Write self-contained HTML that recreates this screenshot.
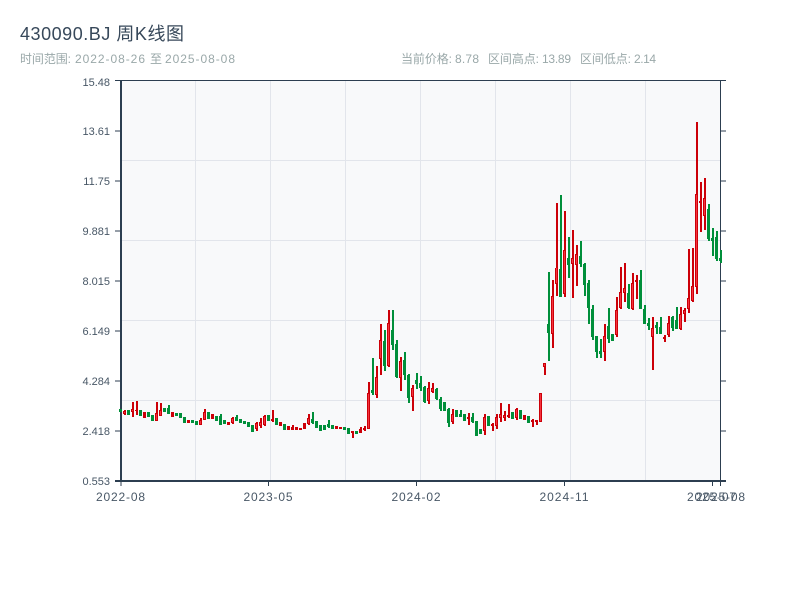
<!DOCTYPE html>
<html lang="zh">
<head>
<meta charset="utf-8">
<title>430090.BJ 周K线图</title>
<style>
html,body{margin:0;padding:0;background:#fff;width:800px;height:600px;overflow:hidden}
svg{display:block}
text{font-family:"Liberation Sans","Noto Sans CJK SC",sans-serif}
</style>
</head>
<body>
<svg width="800" height="600" viewBox="0 0 800 600" xmlns="http://www.w3.org/2000/svg">
<rect width="800" height="600" fill="#fff"/>
<text x="20" y="40" font-size="18" fill="#37485a" textLength="164" lengthAdjust="spacing">430090.BJ 周K线图</text>
<g font-size="12" fill="#9aa8a9">
<text x="20" y="63" textLength="51">时间范围:</text>
<text x="75" y="63" textLength="70">2022-08-26</text>
<text x="150" y="63">至</text>
<text x="165" y="63" textLength="70">2025-08-08</text>
<text x="401" y="63" textLength="51">当前价格:</text>
<text x="455" y="63" textLength="24">8.78</text>
<text x="488" y="63" textLength="51">区间高点:</text>
<text x="542" y="63" textLength="29">13.89</text>
<text x="580" y="63" textLength="51">区间低点:</text>
<text x="634" y="63" textLength="22">2.14</text>
</g>

<rect x="121" y="81" width="600" height="400" fill="#f8f9fa"/>
<path d="M195.5 81V481M270.5 81V481M345.5 81V481M420.5 81V481M495.5 81V481M570.5 81V481M645.5 81V481M121 160.5H720M121 240.5H720M121 320.5H720M121 400.5H720" stroke="#e2e5eb" stroke-width="1" fill="none"/>

<g stroke="#2c3e50" fill="none">
<path d="M115 80.5H726M720.5 81V481" stroke-width="1"/>
<path d="M121 80V482M115 481H726" stroke-width="2"/>
<path d="M115 131H120M115 181H120M115 231H120M115 281H120M115 331H120M115 381H120M115 431H120M720 131H726M720 181H726M720 231H726M720 281H726M720 331H726M720 381H726M720 431H726M121 482V486M268.5 482V486M416.5 482V486M564.5 482V486M712.5 482V486M720.5 482V486" stroke-width="1"/>
</g>

<g font-size="11" fill="#485766" text-anchor="end">
<text x="110" y="86">15.48</text>
<text x="110" y="135">13.61</text>
<text x="110" y="185">11.75</text>
<text x="110" y="235">9.881</text>
<text x="110" y="285">8.015</text>
<text x="110" y="335">6.149</text>
<text x="110" y="385">4.284</text>
<text x="110" y="435">2.418</text>
<text x="110" y="485">0.553</text>
</g>
<g font-size="12" fill="#485766" text-anchor="middle">
<text x="120.5" y="501" textLength="49">2022-08</text>
<text x="268" y="501" textLength="49">2023-05</text>
<text x="416" y="501" textLength="49">2024-02</text>
<text x="564" y="501" textLength="49">2024-11</text>
<text x="711.5" y="501" textLength="49">2025-07</text>
<text x="720.5" y="501" textLength="49">2025-08</text>
</g>

<!-- green wicks -->
<path fill="none" stroke="#008f3a" stroke-width="2" d="M121 409V412M129 410V415M141 410V416M149 412V417M153 415V421M165 408V412M169 405V414M177 413V416M181 413V418M185 417V423M193 420V423M197 421V425M209 412V419M217 416V421M221 414V425M225 420V424M237 415V421M241 419V423M245 421V424M249 422V427M253 425V432M269 415V421M277 418V425M285 424V430M313 412V424M317 421V428M321 425V431M325 425V430M329 420V428M333 425V429M345 427V430M349 428V434M357 431V434M373 358V395M385 330V371M393 310V350M397 340V378M405 352V380M409 374V403M417 373V389M421 376V391M425 386V403M437 388V400M441 397V411M445 402V411M449 408V427M457 410V417M461 410V417M465 414V421M473 413V423M477 421V436M481 429V434M489 416V426M513 412V419M521 410V419M529 416V423M549 272V361M561 195V297M569 237V278M581 241V267M585 263V296M589 280V324M593 305V340M597 336V358M601 339V358M609 308V343M613 334V341M629 284V309M641 270V309M645 305V324M649 318V330M657 322V334M661 317V334M673 316V331M677 307V329M709 204V241M713 228V256M717 231V261M721 250V263"/>
<!-- green bodies -->
<path fill="none" stroke="#008f3a" stroke-width="3" d="M120.500 409V412M128.500 410V415M140.500 410V416M148.500 412V417M152.500 415V421M164.500 408V412M168.500 408V414M176.500 413V416M180.500 413V418M184.500 417V423M192.500 420V423M196.500 421V425M208.500 412V419M216.500 416V421M220.500 416V425M224.500 420V424M236.500 417V421M240.500 419V423M244.500 421V424M248.500 422V427M252.500 425V432M268.500 415V421M276.500 418V425M284.500 424V430M312.500 419V423M316.500 421V428M320.500 425V431M324.500 425V430M328.500 424V427M332.500 425V429M344.500 427V430M348.500 428V434M356.500 431V434M372.500 390V393M384.500 341V366M392.500 330V345M396.500 344V377M404.500 360V375M408.500 375V398M416.500 380V384M420.500 383V388M424.500 387V402M436.500 389V399M440.500 399V409M444.500 402V411M448.500 409V423M456.500 410V417M460.500 414V417M464.500 414V421M472.500 417V422M476.500 421V436M480.500 429V434M488.500 416V426M512.500 412V419M520.500 410V419M528.500 416V423M548.500 324V333M560.500 269V297M568.500 258V265M580.500 256V264M584.500 264V285M588.500 283V308M592.500 309V337M596.500 336V352M600.500 351V354M608.500 326V339M612.500 334V341M628.500 293V308M640.500 280V309M644.500 309V324M648.500 323V326M656.500 325V328M660.500 327V334M672.500 317V328M676.500 320V329M708.500 209V239M712.500 238V241M716.500 237V259M720.500 258V261"/>
<!-- red wicks -->
<path fill="none" stroke="#cc0008" stroke-width="2" d="M125 410V415M133 402V417M137 401V415M145 412V418M157 402V421M161 403V416M173 412V417M189 420V423M201 418V425M205 409V420M213 414V419M229 422V425M233 417V424M257 422V431M261 418V428M265 415V426M273 410V422M281 422V426M289 426V430M293 425V430M297 427V430M301 428V430M305 423V429M309 414V425M337 426V429M341 427V429M353 431V438M361 427V433M365 426V431M369 382V429M377 366V398M381 324V375M389 310V367M401 357V391M413 385V411M429 382V404M433 383V393M453 409V424M469 413V425M485 414V435M493 423V431M497 414V429M501 403V422M505 411V421M509 404V418M517 408V420M525 415V420M533 419V427M537 420V425M541 393V422M545 363V375M553 280V348M557 203V296M565 211V297M573 230V298M577 245V286M605 324V361M617 297V337M621 267V309M625 263V302M633 273V310M637 275V299M653 317V370M665 335V342M669 316V337M681 307V330M685 308V322M689 249V313M693 248V302M697 122V294M701 182V232M705 178V230"/>
<!-- red bodies outer -->
<path fill="none" stroke="#cc0008" stroke-width="3" d="M124.500 411V414M132.500 409V412M136.500 410V411M144.500 412V418M156.500 413V421M160.500 410V416M172.500 412V417M188.500 420V423M200.500 420V425M204.500 412V420M212.500 414V419M228.500 422V425M232.500 418V423M256.500 423V429M260.500 422V426M264.500 416V425M272.500 419V421M280.500 422V426M288.500 426V430M292.500 427V430M296.500 427V430M300.500 428V430M304.500 423V429M308.500 418V424M336.500 426V429M340.500 427V429M352.500 431V433M360.500 429V433M364.500 428V430M368.500 393V429M376.500 377V395M380.500 340V359M388.500 323V366M400.500 361V378M412.500 388V397M428.500 388V401M432.500 388V392M452.500 414V422M468.500 417V419M484.500 417V431M492.500 424V426M496.500 417V426M500.500 414V418M504.500 415V418M508.500 415V417M516.500 409V418M524.500 415V420M532.500 420V422M536.500 420V422M540.500 393V422M544.500 363V367M552.500 296V334M556.500 268V284M564.500 250V294M572.500 258V264M576.500 254V265M604.500 336V352M616.500 310V335M620.500 292V308M624.500 288V293M632.500 283V309M636.500 280V282M652.500 328V337M664.500 337V339M668.500 323V335M680.500 314V329M684.500 310V314M688.500 298V309M692.500 286V301M696.500 194V287M700.500 201V203M704.500 198V216"/>
<!-- red bodies inner -->
<path fill="none" stroke="#f5333f" stroke-width="1" d="M124.500 412V413M132.500 410V411M156.500 414V420M160.500 411V415M200.500 421V424M204.500 413V419M232.500 419V422M256.500 424V428M260.500 423V425M264.500 417V424M308.500 419V423M368.500 394V428M376.500 378V394M380.500 341V358M388.500 324V365M400.500 362V377M412.500 389V396M428.500 389V400M432.500 389V391M452.500 415V421M484.500 418V430M496.500 418V425M500.500 415V417M504.500 416V417M516.500 410V417M540.500 394V421M544.500 364V366M552.500 297V333M556.500 268V283M564.500 251V293M572.500 259V263M576.500 255V264M604.500 337V351M616.500 311V334M620.500 293V307M624.500 289V292M632.500 284V308M652.500 329V336M668.500 324V334M680.500 315V328M684.500 311V313M688.500 299V308M692.500 287V300M696.500 195V286M704.500 199V215"/>
</svg>
</body>
</html>
